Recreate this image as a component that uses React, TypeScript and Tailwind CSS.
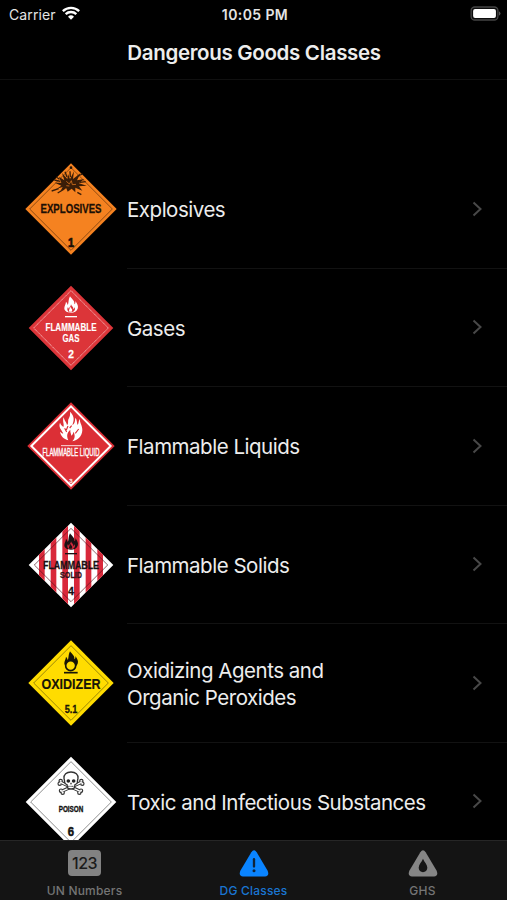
import type { ReactNode } from "react";

const FLAME =
  "M-3 -86 C2 -78 12 -73 10 -62 C13 -64 14 -68 13 -72 C19 -64 23 -56 20 -49 C17 -41 10 -37 0 -37 C-12 -37 -20 -42 -20 -50 C-20 -57 -16 -61 -15 -70 C-11 -66 -11 -63 -10 -60 C-6 -66 -9 -74 -3 -86 Z";
const FLAME_CORE =
  "M0 -62 C1 -57 8 -54 7 -48 C10 -49 11 -52 11 -54 C14 -46 10 -39 0 -38 C-9 -38 -14 -45 -9 -54 C-8 -51 -7 -50 -6 -49 C-5 -54 0 -56 0 -62 Z";

function Label({
  y,
  size,
  width,
  fill = "#111",
  weight = 700,
  outline = 0.8,
  condense = 1,
  children,
}: {
  y: number;
  size: number;
  width: number;
  fill?: string;
  weight?: number;
  outline?: number;
  condense?: number;
  children: string;
}) {
  return (
    <text
      x="0"
      y={y}
      transform={`scale(${condense} 1)`}
      fontSize={size}
      fontWeight={weight}
      fill={fill}
      stroke={fill}
      strokeWidth={outline}
      textAnchor="middle"
      textLength={width / condense}
      lengthAdjust="spacingAndGlyphs"
      fontFamily='"Liberation Sans", sans-serif'
    >
      {children}
    </text>
  );
}

function Placard({ half, fill, children }: { half: number; fill: string; children: ReactNode }) {
  return (
    <svg viewBox="-156 -156 312 312" className="-my-2 size-[104px] shrink-0 overflow-visible">
      <path d={`M0 ${-half} L${half} 0 L0 ${half} L${-half} 0 Z`} fill={fill} />
      {children}
    </svg>
  );
}

function Explosives() {
  return (
    <Placard half={137} fill="#f58220">
      <path d="M0 -124 L124 0 L0 124 L-124 0 Z" fill="none" stroke="#5d300c" strokeWidth="2" />
      <circle cx="0" cy="-124" r="4" fill="#2a1606" />
      <path
        d="M-44 -60 L-29 -70 L-49 -79 L-29 -79 L-36 -97 L-20 -86 L-27 -108 L-11 -90 L-9 -105 L-3 -90 L9 -113 L6 -90 L29 -108 L18 -86 L40 -90 L24 -77 L47 -70 L24 -68 L34 -55 L13 -64 L13 -50 L2 -61 L-10 -52 L-14 -62 L-31 -55 L-25 -66 Z"
        fill="#3a1d08"
      />
      <path
        d="M-58 -54 L-37 -61 M-50 -87 L-32 -83 M-18 -112 L-12 -96 M20 -99 L35 -105 M27 -80 L44 -82 M-40 -48 L-20 -60 M19 -50 L31 -43 M-3 -113 L-2 -96 M-45 -96 L-35 -90"
        fill="none"
        stroke="#3a1d08"
        strokeWidth="4"
      />
      <path d="M-14 -83 L-5 -75 L1 -85 L4 -73 L15 -74 M-14 -70 L-5 -69" stroke="#d4701c" strokeWidth="2.5" fill="none" />
      <Label y={13} size={38} width={183} outline={0.8} condense={0.8} fill="#1c0f05">EXPLOSIVES</Label>
      <Label y={113} size={38} width={18} outline={2} fill="#1c0f05">1</Label>
    </Placard>
  );
}

function FlammableGas() {
  return (
    <Placard half={127} fill="#dc3539">
      <path d="M0 -112 L112 0 L0 112 L-112 0 Z" fill="none" stroke="#f7c9ca" strokeWidth="2.5" strokeDasharray="4 1.5" />
      <g transform="translate(0 -9)">
        <path d={FLAME} fill="#fff" />
        <path d={FLAME_CORE} fill="#dc3539" />
        <path d="M-3 -56 C0 -48 7 -48 2 -40 L-5 -40 C-8 -45 -2 -49 -3 -56 Z" fill="#fff" />
      </g>
      <path d="M-18 -34 H18" stroke="#fff" strokeWidth="4" />
      <Label y={10} size={30} width={153} outline={0.4} condense={0.85} fill="#fff">FLAMMABLE</Label>
      <Label y={42} size={30} width={51} outline={0.4} condense={0.8} fill="#fff">GAS</Label>
      <Label y={90} size={34} width={17} fill="#fff">2</Label>
    </Placard>
  );
}

function FlammableLiquid() {
  return (
    <Placard half={131} fill="#dc2f36">
      <path d="M0 -119 L119 0 L0 119 L-119 0 Z" fill="none" stroke="#fff" strokeWidth="6" />
      <path
        d="M-3 -103 C12 -89 9 -76 4 -63 C12 -67 12 -77 13 -85 C19 -78 17 -69 20 -63 C24 -68 22 -77 27 -81 C25 -71 34 -63 34 -47 C33 -29 20 -16 4 -14 C12 -23 13 -30 8 -43 C6 -36 3 -33 1 -31 C0 -38 -3 -43 -2 -49 C-10 -42 -15 -33 -8 -17 C-22 -21 -31 -30 -33 -43 C-28 -39 -26 -37 -23 -38 C-30 -51 -38 -56 -33 -70 C-30 -62 -26 -60 -23 -57 C-19 -65 -27 -73 -22 -86 C-19 -74 -14 -72 -12 -63 C-6 -68 -11 -76 -7 -82 C-3 -90 -2 -94 -3 -103 Z"
        fill="#fff"
      />
      <path d="M-13 -42 L-19 -53 M13 -38 L23 -51 M2 -61 L-4 -54 M-9 -60 L-14 -48" stroke="#dc2f36" strokeWidth="3.5" />
      <path d="M-30 -1 H32" stroke="#fbdcdd" strokeWidth="3" />
      <Label y={30} size={33} width={171} outline={1.2} condense={0.6} fill="#fff" weight={400}>
        FLAMMABLE LIQUID
      </Label>
      <Label y={110} size={18} width={10} fill="#fbdcdd">3</Label>
    </Placard>
  );
}

function FlammableSolid() {
  return (
    <Placard half={127} fill="#fff">
      <clipPath id="solid-edge">
        <path d="M0 -127 L127 0 L0 127 L-127 0 Z" />
      </clipPath>
      <g clipPath="url(#solid-edge)" fill="#d9283a">
        {[-96, -61, -26, 9, 44, 79].map((x) => (
          <rect key={x} x={x} y="-130" width="17" height="260" />
        ))}
      </g>
      <path d="M0 -110 L110 0 L0 110 L-110 0 Z" fill="none" stroke="#50151c" strokeWidth="2" />
      <g transform="translate(0 -9)">
        <path d={FLAME} fill="#1a1013" />
        <path d={FLAME_CORE} fill="#c9283a" />
        <path d="M-3 -56 C0 -48 7 -48 2 -40 L-5 -40 C-8 -45 -2 -49 -3 -56 Z" fill="#1a1013" />
      </g>
      <path d="M-18 -34 H18" stroke="#1a1013" strokeWidth="4" />
      <Label y={12} size={32} width={168} outline={0.8} condense={0.87} fill="#1a1013">FLAMMABLE</Label>
      <Label y={39} size={27} width={66} outline={0.8} condense={0.85} fill="#301219">SOLID</Label>
      <Label y={90} size={31} width={18} fill="#1a1013">4</Label>
    </Placard>
  );
}

function Oxidizer() {
  return (
    <Placard half={128} fill="#ffdc00">
      <path d="M0 -112 L112 0 L0 112 L-112 0 Z" fill="none" stroke="#6b5d0a" strokeWidth="2" />
      <g transform="translate(0 -9)">
        <path d={FLAME} fill="#171507" />
      </g>
      <circle cx="-1" cy="-52" r="15" fill="#ffdc00" stroke="#171507" strokeWidth="5" />
      <path d="M-21 -31 H20" stroke="#171507" strokeWidth="5" />
      <Label y={17} size={45} width={177} outline={0.5} condense={0.88} fill="#171507">OXIDIZER</Label>
      <Label y={89} size={33} width={38} fill="#171507">5.1</Label>
    </Placard>
  );
}

function Poison() {
  return (
    <Placard half={136} fill="#fff">
      <path d="M0 -121 L121 0 L0 121 L-121 0 Z" fill="none" stroke="#777" strokeWidth="2.5" />
      <g strokeLinecap="round">
        <path d="M-31 -59 L28 -32 M31 -59 L-28 -32" stroke="#333" strokeWidth="10" />
        <g fill="#fff" stroke="#333" strokeWidth="3.5">
          <circle cx="-31" cy="-63" r="5" />
          <circle cx="-34" cy="-55" r="5" />
          <circle cx="31" cy="-63" r="5" />
          <circle cx="34" cy="-55" r="5" />
          <circle cx="-30" cy="-34" r="5" />
          <circle cx="-25" cy="-28" r="5" />
          <circle cx="30" cy="-34" r="5" />
          <circle cx="25" cy="-28" r="5" />
        </g>
        <path d="M-31 -59 L28 -32 M31 -59 L-28 -32" stroke="#fff" strokeWidth="4" />
      </g>
      <path
        d="M0 -90 C14 -90 22 -82 21 -71 C20 -66 19 -64 19 -58 C18 -54 14 -53 12 -52 L10 -42 C6 -38 -6 -38 -10 -42 L-12 -52 C-14 -53 -18 -54 -19 -58 C-19 -64 -20 -66 -21 -71 C-22 -82 -14 -90 0 -90 Z"
        fill="#fff"
        stroke="#333"
        strokeWidth="4"
      />
      <ellipse cx="-8" cy="-63" rx="5.5" ry="5" fill="#222" />
      <ellipse cx="8" cy="-63" rx="5.5" ry="5" fill="#222" />
      <path d="M0 -59 L3 -53 H-3 Z" fill="#222" />
      <path d="M-8 -47 H8" stroke="#222" strokeWidth="3" strokeDasharray="2.5 1.2" />
      <Label y={29} size={25} width={74} outline={1} condense={0.8}>POISON</Label>
      <Label y={101} size={36} width={19} outline={1.5}>6</Label>
    </Placard>
  );
}

const rows: { lines: string[]; sign: ReactNode }[] = [
  { lines: ["Explosives"], sign: <Explosives /> },
  { lines: ["Gases"], sign: <FlammableGas /> },
  { lines: ["Flammable Liquids"], sign: <FlammableLiquid /> },
  { lines: ["Flammable Solids"], sign: <FlammableSolid /> },
  { lines: ["Oxidizing Agents and", "Organic Peroxides"], sign: <Oxidizer /> },
  { lines: ["Toxic and Infectious Substances"], sign: <Poison /> },
];

function StatusBar() {
  return (
    <div className="grid h-7 shrink-0 grid-cols-3 items-center pl-[9px] pr-1.5 text-[14px] text-[#e4e4e4]">
      <div className="flex items-center gap-1.5">
        <span className="tracking-[0.1px]">Carrier</span>
        <svg viewBox="0 0 54 42" className="-mt-0.5 h-[14px] w-[18px]" fill="none" stroke="#fff" strokeWidth="7">
          <path d="M2.5 15.5 A35 35 0 0 1 51.500 15.500" />
          <path d="M11 24.500 A23 23 0 0 1 43 24.500" />
          <path d="M27 41 L18 32 A13 13 0 0 1 36 32 Z" fill="#fff" stroke="none" />
        </svg>
      </div>
      <div className="text-center font-semibold tracking-[0.4px]">10:05 PM</div>
      <svg viewBox="0 0 92 46" className="-mt-0.5 h-[15px] w-[31px] justify-self-end">
        <rect x="2" y="3" width="82" height="40" rx="11" fill="#0c0c0c" stroke="#444" strokeWidth="4" />
        <rect x="8" y="9" width="70" height="28" rx="6" fill="#fff" />
        <path d="M87 16 Q92 19 92 23 Q92 27 87 30 Z" fill="#555" />
      </svg>
    </div>
  );
}

function TabBar() {
  return (
    <nav className="grid h-[60px] shrink-0 grid-cols-3 border-t border-[#262626] bg-[#141414] text-[12px] font-medium leading-[14px] tracking-[0.2px] text-[#757575]">
      <div className="flex flex-col items-center pt-[9px]">
        <div className="flex h-[26px] w-[33px] items-center justify-center rounded-[4px] bg-[#828282] text-[16px] font-medium tracking-[-0.5px] text-[#1b1b1b]">
          123
        </div>
        <span className="mt-[8px]">UN Numbers</span>
      </div>
      <div className="flex flex-col items-center pt-[9px] text-[#1a76d2]">
        <svg viewBox="0 0 90 80" className="h-[27px] w-[30px]">
          <path d="M37 6 Q45 -5 53 6 L86 62 Q92 77 78 79 H12 Q-2 77 4 62 Z" fill="#0a84ff" />
          <path d="M45 27 V49" stroke="#10243a" strokeWidth="7" strokeLinecap="round" />
          <circle cx="45" cy="62" r="4.500" fill="#10243a" />
        </svg>
        <span className="mt-[7px]">DG Classes</span>
      </div>
      <div className="flex flex-col items-center pt-[9px]">
        <svg viewBox="0 0 90 80" className="h-[27px] w-[30px]">
          <path d="M37 6 Q45 -5 53 6 L86 62 Q92 77 78 79 H12 Q-2 77 4 62 Z" fill="#868686" />
          <path d="M45 26 C49 36 58 44 58 53 C58 61 52 66 45 66 C38 66 32 61 32 53 C32 44 41 36 45 26 Z" fill="#161616" />
        </svg>
        <span className="mt-[7px]">GHS</span>
      </div>
    </nav>
  );
}

export default function App() {
  return (
    <div className="flex h-[900px] w-[507px] flex-col overflow-hidden bg-black font-['Inter',sans-serif] text-[#ededed]">
      <StatusBar />
      <header className="flex h-[52px] shrink-0 items-center justify-center border-b border-[#101010] pb-px pl-px text-[20.5px] font-semibold tracking-[-0.32px]">
        Dangerous Goods Classes
      </header>
      <main className="min-h-0 flex-1 overflow-hidden pt-[70px]">
        {rows.map((row) => (
          <div key={row.lines[0]} className="flex h-[118.5px] items-center pl-[19px]">
            {row.sign}
            <div className="ml-1 flex h-full flex-1 items-center justify-between border-b border-[#121212] pr-[25px]">
              <div className="pt-[1.5px] text-[20.5px] leading-[27px] tracking-[-0.48px]">
                {row.lines.map((line) => (
                  <div key={line}>{line}</div>
                ))}
              </div>
              <svg viewBox="0 0 10 16" className="h-4 w-2.5 shrink-0" fill="none" stroke="#484848" strokeWidth="2">
                <path d="M1.500 1.500 L8.500 8 L1.500 14.500" />
              </svg>
            </div>
          </div>
        ))}
      </main>
      <TabBar />
    </div>
  );
}
